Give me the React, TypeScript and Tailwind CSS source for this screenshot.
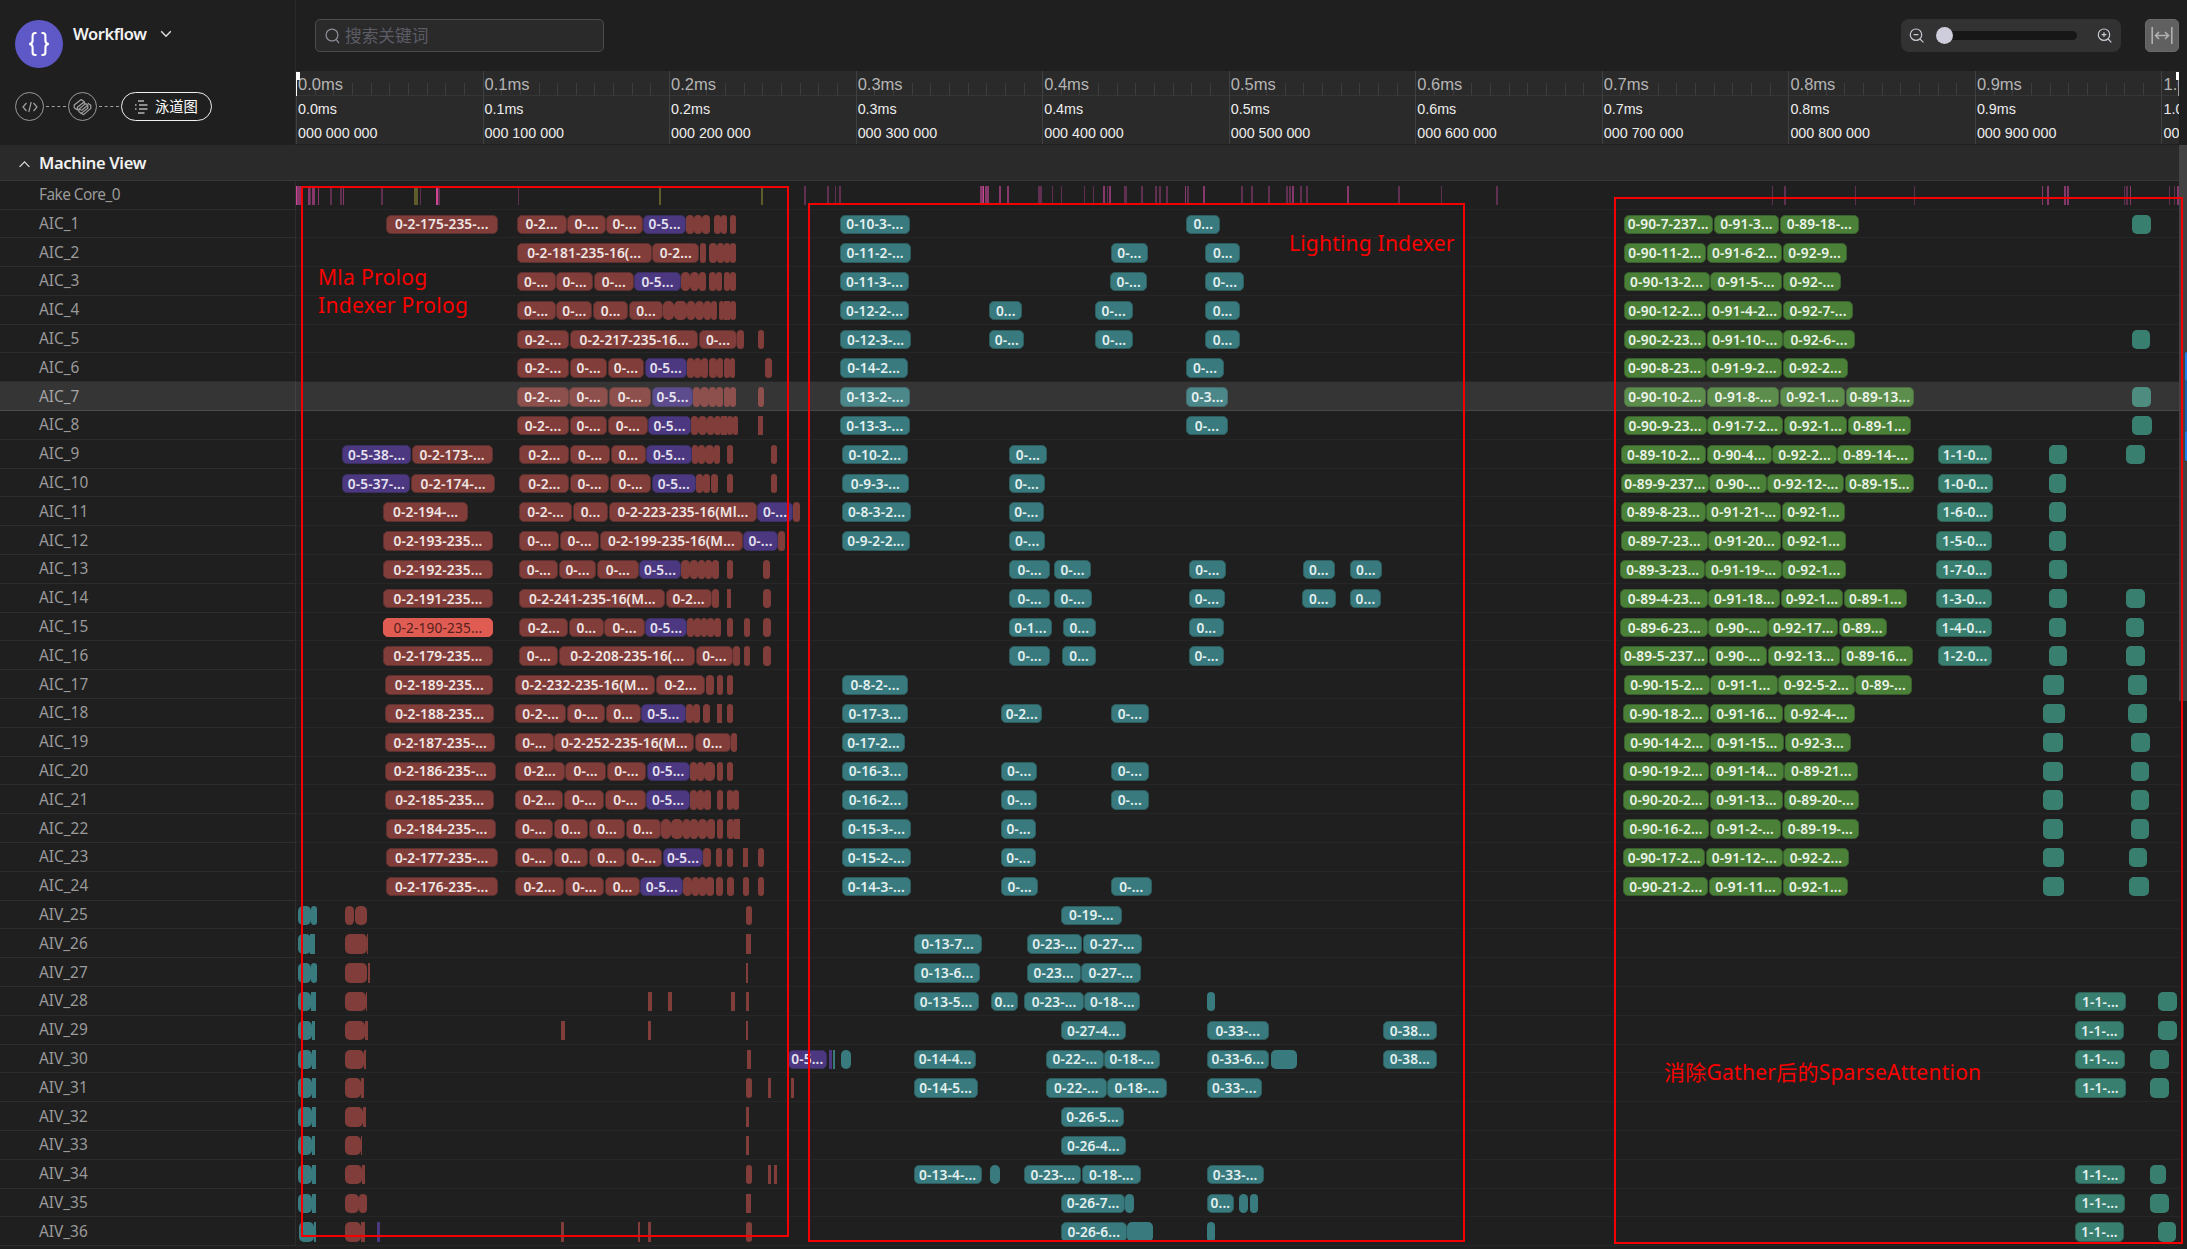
import React from "react";

type Segment = { origin: number; scale: number };

const SEGMENTS: Segment[] = [
  { origin: 290, scale: 3 },
  { origin: 790, scale: 2.3059 },
  { origin: 1590, scale: 2.6265 },
];
const CHART_LEFT = 296;

const COLORS: Record<string, string> = {
  r: "bg-[#803d39] border-[#5c302e] text-[#f0e6e5]",
  p: "bg-[#4b3880] border-[#3a2f60] text-[#e6e2f0]",
  t: "bg-[#387a7d] border-[#2d5c5e] text-[#e4f0f0]",
  g: "bg-[#4a8038] border-[#38602c] text-[#ecf3e9]",
  e: "bg-[#397f70] border-[#2e6156] text-[#e4f1ee]",
  x: "bg-[#e05c52] border-[#e05c52] text-[#54201d]",
  m: "bg-[#86386a]",
  d: "bg-[#5f3050]",
  M: "bg-[#cc4590]",
  o: "bg-[#5f5c2e]",
};

type Lane = { name: string; data: [string, string, string] };

const lane = (name: string, a = "", b = "", c = ""): Lane => ({ name, data: [a, b, c] });

const CORE = lane(
  "Fake Core_0",
  "M18-20, m21-27, m28-32, m36-38, m55-59, d59-63, m66-75, m83-87, d121-125, d151-155, m158-162, d273-278, o372-384, d390-393, M438-445, d445-449, d684-688, o1107-1112, o1413-1419, d1542-1548",
  "d85-89, d104-107, d113-117, m437-447, M444-446, m449-459, m482-486, m500-505, d573-580, d603-607, d624-628, d677-681, d698-702, m721-726, d730-734, m736-740, d770-778, d810-814, d842-846, d852-856, d868-872, m910-914, d916-921, m952-957, d1041-1045, d1064-1067, d1103-1106, d1144-1148, d1151-1155, m1158-1162, d1177-1181, d1190-1194, m1285-1290, d1402-1406, d1500-1503, d1628-1632",
  "d477-481, d510-514, d695-699, d851-854, m1187-1190, m1200-1206, m1245-1249, m1253-1258, d1402-1405, d1408-1412, m1417-1421, d1521-1523, d1533-1536, m1542-1547"
);

const LANES: Lane[] = [
  lane("AIC_1", "r288-623 0-2-175-235-..., r680-830 0-2..., r832-947 0-..., r949-1058 0-..., p1060-1188 0-5..., r1189-1213, r1213-1236, r1236-1259, r1272-1294, r1294-1311, r1319-1337", "t115-276 0-10-3-..., t914-992 0...", "g88-323 0-90-7-237..., g325-497 0-91-3..., g499-706 0-89-18-..., e1424-1473"),
  lane("AIC_2", "r680-1085 0-2-181-235-16(..., r1087-1228 0-2..., r1229-1249, r1256-1281, r1281-1301, r1301-1320, r1320-1337", "t115-278 0-11-2-..., t740-825 0-..., t958-1038 0...", "g88-305 0-90-11-2..., g307-505 0-91-6-2..., g506-674 0-92-9..."),
  lane("AIC_3", "r680-797 0-..., r799-909 0-..., r911-1032 0-..., p1033-1172 0-5..., r1172-1201, r1201-1226, r1226-1249, r1256-1277, r1277-1296, r1302-1321, r1321-1339", "t115-275 0-11-3-..., t739-823 0-..., t958-1048 0-...", "g88-314 0-90-13-2..., g315-505 0-91-5-..., g506-660 0-92-..."),
  lane("AIC_4", "r680-797 0-..., r799-907 0-..., r909-1015 0..., r1017-1119 0..., r1119-1153, r1153-1191, r1192-1214, r1214-1241, r1241-1262, r1262-1280, r1286-1303, r1303-1319, r1319-1337", "t115-275 0-12-2-..., t460-535 0..., t703-790 0-..., t958-1037 0...", "g88-305 0-90-12-2..., g307-505 0-91-4-2..., g506-692 0-92-7-..."),
  lane("AIC_5", "r680-838 0-2-..., r840-1225 0-2-217-235-16..., r1227-1341 0-..., r1341-1361, r1404-1421", "t115-280 0-12-3-..., t460-540 0-..., t703-792 0-..., t958-1037 0...", "g88-305 0-90-2-23..., g306-507 0-91-10-..., g508-695 0-92-6-..., e1424-1471"),
  lane("AIC_6", "r680-838 0-2-..., r840-952 0-..., r953-1063 0-..., p1064-1191 0-5..., r1191-1213, r1213-1234, r1234-1254, r1256-1280, r1280-1300, r1302-1319, r1319-1336, r1425-1446", "t115-271 0-14-2..., t914-1000 0-...", "g88-304 0-90-8-23..., g305-505 0-91-9-2..., g506-678 0-92-2..."),
  lane("AIC_7", "r680-836 0-2-..., r837-955 0-..., r956-1083 0-..., p1085-1210 0-5..., r1210-1231, r1231-1258, r1258-1279, r1279-1299, r1301-1319, r1319-1338, r1404-1421", "t115-277 0-13-2-..., t914-1011 0-3...", "g88-305 0-90-10-2..., g307-497 0-91-8-..., g498-671 0-92-1..., g672-851 0-89-13..., e1423-1473"),
  lane("AIC_8", "r680-838 0-2-..., r840-952 0-..., r953-1074 0-..., p1075-1202 0-5..., r1202-1225, r1225-1251, r1251-1273, r1273-1294, r1294-1310, r1310-1328, r1328-1345, r1404-1420", "t115-276 0-13-3-..., t914-1009 0-...", "g88-306 0-90-9-23..., g308-508 0-91-7-2..., g509-676 0-92-1..., g677-843 0-89-1..., e1424-1475"),
  lane("AIC_9", "p157-363 0-5-38-..., r365-608 0-2-173-..., r688-838 0-2..., r840-961 0-..., r962-1068 0..., p1069-1205 0-5..., r1205-1225, r1225-1244, r1244-1271, r1271-1289, r1311-1329, r1444-1461", "t119-272 0-10-2..., t505-592 0-...", "g81-306 0-89-10-2..., g307-477 0-90-4..., g478-649 0-92-2..., g650-850 0-89-14-..., e915-1056 1-1-0..., e1206-1253, e1409-1459"),
  lane("AIC_10", "p157-361 0-5-37-..., r363-616 0-2-174-..., r688-838 0-2..., r840-958 0-..., r960-1084 0-..., p1086-1217 0-5..., r1217-1239, r1239-1261, r1264-1285, r1310-1329, r1444-1461", "t119-275 0-9-3-..., t505-587 0-...", "g81-312 0-89-9-237..., g313-465 0-90-..., g466-668 0-92-12-..., g669-851 0-89-15..., e915-1058 1-0-0..., e1206-1249"),
  lane("AIC_11", "r280-534 0-2-194-..., r688-846 0-2-..., r848-955 0..., r957-1401 0-2-223-235-16(Ml..., p1402-1508 0-..., r1508-1529", "t119-280 0-8-3-2..., t505-585 0-...", "g81-304 0-89-8-23..., g305-502 0-91-21-..., g503-671 0-92-1..., e911-1058 1-6-0..., e1206-1250"),
  lane("AIC_12", "r280-608 0-2-193-235..., r688-808 0-..., r810-928 0-..., r930-1359 0-2-199-235-16(M..., p1360-1463 0-..., r1464-1485", "t119-277 0-9-2-2..., t505-589 0-...", "g81-309 0-89-7-23..., g310-502 0-91-20..., g503-672 0-92-1..., e910-1057 1-5-0..., e1206-1251"),
  lane("AIC_13", "r280-608 0-2-192-235..., r688-805 0-..., r807-918 0-..., r920-1047 0-..., p1048-1172 0-5..., r1173-1201, r1201-1224, r1224-1245, r1245-1265, r1265-1286, r1310-1328, r1419-1441", "t505-600 0-..., t608-695 0-..., t920-1005 0-..., t1182-1257 0..., t1291-1365 0...", "g80-302 0-89-3-23..., g303-504 0-91-19-..., g505-672 0-92-1..., e910-1057 1-7-0..., e1206-1254"),
  lane("AIC_14", "r280-608 0-2-191-235..., r688-1126 0-2-241-235-16(M..., r1127-1265 0-2..., r1265-1287, r1310-1324, r1419-1443", "t505-600 0-..., t608-696 0-..., t920-1003 0-..., t1181-1258 0..., t1291-1363 0...", "g80-310 0-89-4-23..., g311-500 0-91-18..., g501-665 0-92-1..., g666-833 0-89-1..., e909-1055 1-3-0..., e1206-1254, e1409-1457"),
  lane("AIC_15", "x280-608 0-2-190-235..., r688-835 0-2..., r837-941 0..., r943-1064 0-..., p1065-1192 0-5..., r1192-1211, r1211-1232, r1232-1252, r1252-1273, r1273-1293, r1310-1328, r1363-1380, r1418-1443", "t505-604 0-1..., t629-705 0..., t920-1000 0...", "g80-310 0-89-6-23..., g311-467 0-90-..., g468-652 0-92-17..., g653-779 0-89..., e909-1055 1-4-0..., e1206-1250, e1409-1455"),
  lane("AIC_16", "r280-608 0-2-179-235..., r688-805 0-..., r807-1216 0-2-208-235-16(..., r1217-1330 0-..., r1330-1351, r1363-1380, r1418-1444", "t505-600 0-..., t628-705 0..., t920-1001 0-...", "g80-311 0-89-5-237..., g312-466 0-90-..., g467-657 0-92-13..., g658-848 0-89-16..., e914-1056 1-2-0..., e1206-1253, e1409-1457"),
  lane("AIC_17", "r286-610 0-2-189-235..., r675-1095 0-2-232-235-16(M..., r1097-1246 0-2..., r1247-1271, r1280-1299, r1311-1328", "t119-273 0-8-2-...", "g88-315 0-90-15-2..., g316-493 0-91-1..., g494-695 0-92-5-2..., g696-846 0-89-..., e1191-1245, e1414-1462"),
  lane("AIC_18", "r286-612 0-2-188-235..., r675-829 0-2-..., r831-946 0-..., r947-1052 0..., p1053-1187 0-5..., r1187-1210, r1210-1229, r1238-1260, r1281-1297, r1311-1330", "t119-272 0-17-3..., t487-582 0-2..., t740-828 0-...", "g87-313 0-90-18-2..., g314-508 0-91-16..., g509-695 0-92-4-..., e1191-1247, e1414-1462"),
  lane("AIC_19", "r286-615 0-2-187-235-..., r675-791 0-..., r793-1213 0-2-252-235-16(M..., r1214-1322 0..., r1322-1341", "t119-266 0-17-2...", "g88-315 0-90-14-2..., g316-510 0-91-15..., g511-685 0-92-3..., e1191-1242, e1422-1471"),
  lane("AIC_20", "r286-617 0-2-186-235-..., r675-824 0-2..., r826-948 0-..., r950-1069 0-..., p1070-1200 0-5..., r1201-1222, r1222-1242, r1242-1274, r1281-1299, r1312-1329", "t119-273 0-16-3..., t487-570 0-..., t740-828 0-...", "g87-313 0-90-19-2..., g314-509 0-91-14..., g510-705 0-89-21..., e1191-1243, e1422-1469"),
  lane("AIC_21", "r286-612 0-2-185-235..., r675-820 0-2..., r822-942 0-..., r944-1069 0-..., p1069-1200 0-5..., r1201-1222, r1222-1242, r1242-1264, r1280-1299, r1311-1330, r1330-1347", "t119-273 0-16-2..., t487-570 0-..., t740-827 0-...", "g87-313 0-90-20-2..., g314-508 0-91-13..., g509-706 0-89-20-..., e1191-1242, e1422-1468"),
  lane("AIC_22", "r287-617 0-2-184-235-..., r675-790 0-..., r792-895 0..., r897-1005 0..., r1007-1112 0..., r1113-1143, r1143-1178, r1178-1201, r1201-1223, r1223-1250, r1250-1274, r1281-1299, r1311-1333, r1333-1349", "t119-280 0-15-3-..., t487-567 0-...", "g87-313 0-90-16-2..., g314-502 0-91-2-..., g503-707 0-89-19-..., e1191-1242, e1422-1469"),
  lane("AIC_23", "r287-623 0-2-177-235-..., r675-790 0-..., r792-895 0..., r897-1005 0..., r1007-1117 0-..., p1118-1240 0-5..., r1240-1264, r1279-1297, r1311-1330, r1359-1374, r1405-1422", "t119-279 0-15-2-..., t486-567 0-...", "g87-303 0-90-17-2..., g304-507 0-91-12-..., g508-679 0-92-2..., e1191-1245, e1415-1464"),
  lane("AIC_24", "r287-623 0-2-176-235-..., r675-822 0-2..., r824-943 0-..., r945-1050 0..., p1051-1180 0-5..., r1180-1207, r1207-1227, r1227-1247, r1247-1271, r1279-1299, r1311-1331, r1359-1378, r1405-1423", "t119-279 0-14-3-..., t486-573 0-..., t740-834 0-...", "g87-311 0-90-21-2..., g312-505 0-91-11..., g506-678 0-92-1..., e1191-1245, e1415-1468"),
  lane("AIV_25", "t24-62, t62-81, r165-193, r194-230, r1368-1386", "t625-765 0-19-..."),
  lane("AIV_26", "t24-62, t61-75, r166-231, r231-234, r1368-1383", "t285-442 0-13-7..., t546-674 0-23-..., t675-811 0-27-..."),
  lane("AIV_27", "t24-62, t62-80, r166-232, r233-239, r1368-1374", "t285-439 0-13-6..., t546-670 0-23..., t671-809 0-27-..."),
  lane("AIV_28", "t24-64, t64-77, r166-229, r228-231, r1074-1085, r1134-1147, r1324-1335, r1368-1377", "t285-435 0-13-5..., t463-526 0..., t540-678 0-23-..., t679-808 0-18-..., t961-981", "e1274-1407 1-1-..., e1492-1542"),
  lane("AIV_29", "t24-65, t65-76, r166-224, r225-234, r813-825, r1074-1082, r1368-1375", "t625-774 0-27-4..., t961-1104 0-33-..., t1367-1492 0-38...", "e1274-1402 1-1-..., e1492-1542"),
  lane("AIV_30", "t25-65, t65-77, r165-221, r222-229, r1370-1384, p1493-1611 0-5...", "p91-97, t100-104, t118-140, t285-430 0-14-4..., t591-723 0-22-..., t724-853 0-18-..., t961-1104 0-33-6..., t1110-1170, t1367-1492 0-38...", "e1274-1405 1-1-..., e1472-1520"),
  lane("AIV_31", "t25-65, t65-78, r165-212, r213-221, r1368-1386, r1433-1443, r1504-1513", "t285-433 0-14-5..., t591-730 0-22-..., t731-869 0-18-..., t961-1088 0-33-...", "e1274-1407 1-1-..., e1472-1520"),
  lane("AIV_32", "t25-65, t65-78, r165-219, r219-228, r1368-1376", "t625-770 0-26-5..."),
  lane("AIV_33", "t25-65, t65-76, r165-212, r212-216, r1368-1376", "t625-774 0-26-4..."),
  lane("AIV_34", "t25-65, t65-78, r165-217, r217-225, r1368-1386, r1433-1442, r1453-1461", "t285-442 0-13-4-..., t462-484, t540-672 0-23-..., t673-809 0-18-..., t961-1092 0-33-...", "e1274-1406 1-1-..., e1471-1514"),
  lane("AIV_35", "t25-65, t65-78, r165-208, r208-231, r1368-1384", "t625-773 0-26-7..., t773-793, t961-1024 0..., t1036-1055, t1060-1079", "e1274-1404 1-1-..., e1471-1520"),
  lane("AIV_36", "t26-71, t71-79, r165-214, r214-225, p262-269, r813-821, r1043-1050, r1074-1083, r1368-1386", "t625-776 0-26-6..., t776-838, t961-981", "e1274-1402 1-1-..., e1492-1538"),
];

function Bars({ data }: { data: Lane["data"] }) {
  return (
    <>
      {data.flatMap((text, s) =>
        text
          .split(", ")
          .filter(Boolean)
          .map((entry, i) => {
            const [, kind, from, to, label] = entry.match(/^(\w)(\d+)-(\d+)(?: (.*))?$/)!;
            const { origin, scale } = SEGMENTS[s];
            const width = (Number(to) - Number(from)) / scale;
            const rounded = width > 5.75 ? "rounded-[5px]" : width > 5.5 ? "rounded-[3px]" : "";
            const weight = kind === "x" ? "font-normal" : "font-semibold";
            return (
              <div
                key={`${s}-${i}`}
                className={`absolute top-[5px] flex h-[19.4px] items-center justify-center whitespace-nowrap font-['Noto_Sans'] text-[13.7px] leading-none tracking-[0.01em] ${weight} ${rounded} ${label ? "border" : ""} ${COLORS[kind]}`}
                style={{ left: origin + Number(from) / scale - CHART_LEFT, width }}
              >
                {label}
              </div>
            );
          })
      )}
    </>
  );
}

function LaneRow({ item, hovered = false }: { item: Lane; hovered?: boolean }) {
  return (
    <div className={`relative flex shrink-0 ${item === CORE ? "h-[28.5px]" : "h-[28.81px]"}`}>
      <div className="flex w-[296px] shrink-0 items-center border-r border-b border-[#2d2d2d] pl-[39px] text-[15.4px] text-[#9a9a9a]">
        <span className={item === CORE ? "tracking-[-0.035em]" : ""}>{item.name}</span>
      </div>
      <div className="relative w-[1883px] overflow-hidden border-b border-[#262626]">
        <Bars data={item.data} />
      </div>
      {hovered && <div className="pointer-events-none absolute inset-y-0 left-0 w-[2179px] border-b border-white/5 bg-white/10" />}
    </div>
  );
}

function Ruler() {
  return (
    <div className="relative flex h-[73px] w-[1883px] overflow-hidden bg-[#2a2a2a]">
      {Array.from({ length: 11 }, (_, i) => {
        const time = `${(i / 10).toFixed(1)}ms`;
        return (
          <div key={i} className="flex w-[186.55px] shrink-0 flex-col border-l border-[#404040] font-['Liberation_Sans'] whitespace-nowrap">
            <div className="relative flex h-[25px] items-center border-b border-[#353535] pl-px text-[16.5px] leading-none text-[#b4b4b4]">
              {Array.from({ length: 9 }, (_, t) => (
                <i key={t} className="absolute bottom-0 h-3 w-px bg-[#3d3d3d]" style={{ left: (t + 1) * 18.655 - 1 }} />
              ))}
              <span className="relative pt-[2px]">{time}</span>
            </div>
            <div className="flex h-6 items-center pl-px pt-[3px] text-[14.3px] leading-none text-[#ededed]">{time}</div>
            <div className="flex h-6 items-center pl-px pt-[3px] text-[14.3px] leading-none text-[#ededed]">
              {i === 10 ? "001 000 000" : `000 ${i}00 000`}
            </div>
          </div>
        );
      })}
      <div className="absolute top-px left-0 h-6 w-px bg-white" />
      <div className="absolute top-px left-0 h-2 w-1 bg-white" />
      <div className="absolute top-px right-0 h-6 w-px bg-[#a0a0a0]" />
      <div className="absolute top-px right-0 h-2 w-[3px] bg-white" />
    </div>
  );
}

function ZoomGlyph({ plus = false }: { plus?: boolean }) {
  return (
    <svg width="15" height="15" viewBox="0 0 15 15" fill="none" stroke="#c8cbd4" strokeWidth="1.2">
      <circle cx="7" cy="6.7" r="5.7" />
      <path d="M11 11l3.4 3.4M4.6 6.7h4.8" />
      {plus && <path d="M7 4.3v4.8" />}
    </svg>
  );
}

function Header() {
  return (
    <div className="flex h-[145px] shrink-0">
      <div className="flex w-[296px] shrink-0 flex-col border-r border-[#2a2a2a] pt-5 pl-[15px]">
        <div className="flex">
          <div className="flex size-12 items-center justify-center rounded-full bg-[#5f59c8]">
            <svg width="22" height="26" viewBox="0 0 22 26" fill="none" stroke="#fff" strokeWidth="2.1">
              <path d="M8.5 2H7.2Q4.6 2 4.6 4.8V9.6Q4.6 12.8 1.2 13Q4.6 13.2 4.6 16.4V21.2Q4.6 24 7.2 24H8.5" />
              <path d="M13.5 2H14.8Q17.4 2 17.4 4.8V9.6Q17.4 12.8 20.8 13Q17.4 13.2 17.4 16.4V21.2Q17.4 24 14.8 24H13.5" />
            </svg>
          </div>
          <div className="ml-[10px] flex h-[28px] items-center">
            <span className="w-[74px] text-[16.5px] font-semibold tracking-[-0.025em] text-[#f2f2f2]">Workflow</span>
            <svg className="ml-[13px]" width="12" height="8" viewBox="0 0 12 8" fill="none" stroke="#e0e0e0" strokeWidth="1.4">
              <path d="M1.2 1.2L6 6.2L10.8 1.2" />
            </svg>
          </div>
        </div>
        <div className="mt-6 flex items-center">
          <div className="flex size-[29px] items-center justify-center rounded-full border-[1.2px] border-[#9a9a9a]">
            <svg width="16" height="12" viewBox="0 0 16 12" fill="none" stroke="#a0a0a0" strokeWidth="1.2">
              <path d="M4.5 2L1 6L4.5 10M11.5 2L15 6L11.5 10M9.2 1L6.8 11" />
            </svg>
          </div>
          <div className="mx-[2px] w-5 border-t border-dashed border-[#a0a0a0]" />
          <div className="flex size-[29px] items-center justify-center rounded-full border-[1.2px] border-[#9a9a9a]">
            <svg width="19" height="18" viewBox="0 0 19 18" fill="none" stroke="#a0a0a0" strokeWidth="1.2" strokeLinejoin="round">
              <path d="M1.2 7L8.2 1.5L11.3 3.8L4.4 9.2V12L1.2 9.8Z" />
              <path d="M5.8 11.2L12.6 5.6L14.8 7.2V10.2L8.2 15.4L5.8 13.6Z" />
              <path d="M11.3 3.8V6.7M14.8 5.2L17.8 7.2V10.4L10.6 16.6L8.2 15.4M14.8 7.2L8.8 12.2L5.8 11.2" />
            </svg>
          </div>
          <div className="mx-[2px] w-5 border-t border-dashed border-[#a0a0a0]" />
          <div className="flex h-[29px] w-[91px] items-center rounded-full border-[1.3px] border-[#f0f0f0] pl-[13px]">
            <svg width="13" height="14" viewBox="0 0 13 14" stroke="#b4b4b4" strokeWidth="1.3">
              <path d="M3 1H9M0 5H1.5M4 5H12.5M0 9H1.5M4 9H12.5M3 13H9.5" />
            </svg>
            <span className="ml-[7px] whitespace-nowrap font-['Noto_Sans_CJK_SC'] text-[14.3px] leading-none text-white">泳道图</span>
          </div>
        </div>
      </div>
      <div className="flex w-[1891px] flex-col">
        <div className="flex h-[71px] items-start pt-[19px] pr-2">
          <div className="ml-[19px] flex h-[33px] w-[289px] items-center rounded-[5px] border border-[#4c4c4c] bg-[#2a2a2a] pl-[9px]">
            <svg width="15" height="16" viewBox="0 0 15 16" fill="none" stroke="#8b8b98" strokeWidth="1.3">
              <circle cx="7" cy="7" r="5.9" />
              <path d="M11 11.3L14 15" />
            </svg>
            <span className="ml-[5px] -mt-px font-['Noto_Sans_CJK_SC'] text-[16.7px] leading-none text-[#5c5c66]">搜索关键词</span>
          </div>
          <div className="ml-auto flex h-[33px] w-[220px] items-center rounded-lg bg-[#323232] pl-2">
            <ZoomGlyph />
            <div className="relative ml-3 h-[9px] w-[141px] rounded-full bg-[#171717]">
              <div className="absolute -top-1 left-0 size-[17px] rounded-full bg-[#cdcddc]" />
            </div>
            <div className="ml-5">
              <ZoomGlyph plus />
            </div>
          </div>
          <div className="ml-6 flex h-[33px] w-[34px] items-center justify-center rounded-[5px] border border-[#6a6a6a] bg-[#606060]">
            <svg width="22" height="17" viewBox="0 0 22 17" fill="none" stroke="#b0b0b0" strokeWidth="1.6">
              <path d="M1.2 0V17M20.8 0V17M4.5 8.5H17.5M8 5L4.5 8.5L8 12M14 5L17.5 8.5L14 12" />
            </svg>
          </div>
        </div>
        <Ruler />
      </div>
    </div>
  );
}

export default function App() {
  return (
    <div className="relative flex h-[1249px] w-[2187px] flex-col overflow-hidden bg-[#1f1f1f] font-['Noto_Sans','Noto_Sans_CJK_SC',sans-serif]">
      <Header />
      <div className="flex min-h-0 flex-1">
        <div className="flex w-[2179px] flex-col">
          <div className="flex h-9 shrink-0 items-center border-b border-[#383838] bg-[#2a2a2a] pt-[2px] pl-[19px]">
            <svg width="11" height="8" viewBox="0 0 11 8" fill="none" stroke="#e0e0e0" strokeWidth="1.2">
              <path d="M0.6 6.8L5.5 1.8L10.4 6.8" />
            </svg>
            <span className="ml-[9px] text-[16.5px] font-semibold tracking-[-0.02em] text-[#f2f2f2]">Machine View</span>
          </div>
          <LaneRow item={CORE} />
          {LANES.map((item) => (
            <LaneRow key={item.name} item={item} hovered={item.name === "AIC_7"} />
          ))}
        </div>
        <div className="relative h-[556px] w-2 bg-[#434343]">
          <div className="absolute top-[207px] right-0 h-[29px] w-[2px] rounded-l bg-[#1e80f0]" />
          <div className="absolute top-[236px] right-0 h-[50px] w-[2px] bg-[#1a5fb8]" />
          <div className="absolute top-[286px] right-0 h-[30px] w-[2px] rounded-l bg-[#1e80f0]" />
        </div>
      </div>

      <div className="absolute top-[186px] left-[301px] h-[1051px] w-[488px] border-2 border-[#f50000]" />
      <div className="absolute top-[203px] left-[808px] h-[1039px] w-[657px] border-2 border-[#f50000]" />
      <div className="absolute top-[197px] left-[1614px] h-[1047px] w-[569px] border-2 border-[#f50000]" />
      <div className="absolute top-[263px] left-[318px] text-[21px] leading-[28px] tracking-[0.015em] whitespace-nowrap text-[#fa0000]">
        Mla Prolog
        <br />
        Indexer Prolog
      </div>
      <div className="absolute top-[229px] left-[1289px] text-[21px] leading-[28px] tracking-[0.01em] whitespace-nowrap text-[#fa0000]">Lighting Indexer</div>
      <div className="absolute top-[1058px] left-[1664px] text-[21px] leading-[28px] tracking-[0.012em] whitespace-nowrap text-[#fa0000]">
        消除Gather后的SparseAttention
      </div>
    </div>
  );
}
